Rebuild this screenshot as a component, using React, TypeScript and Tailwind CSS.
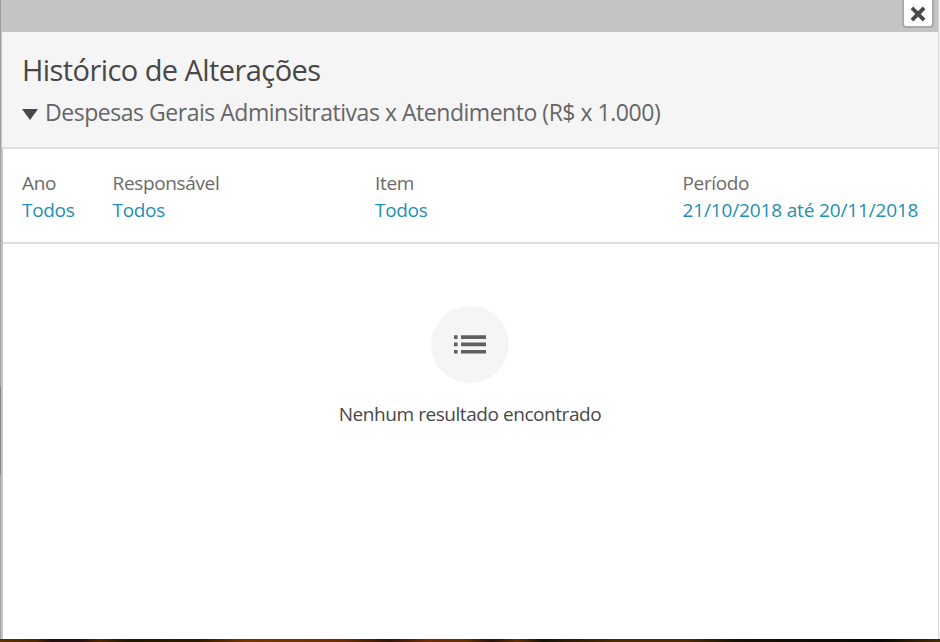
import React from 'react';

const filters = [
  { label: 'Ano', value: 'Todos', width: 'w-[90.5px]', tracking: 'tracking-[-0.3px]' },
  { label: 'Responsável', value: 'Todos', width: 'w-[262.5px]', tracking: 'tracking-[-0.3px]' },
  { label: 'Item', value: 'Todos', width: 'w-[307.5px]', tracking: 'tracking-[-0.3px]' },
  { label: 'Período', value: '21/10/2018 até 20/11/2018', width: 'w-[250px]', tracking: 'tracking-[-0.15px]' },
];

const Header = () => (
  <header className="h-[117px] -ml-px pl-5 bg-[#f5f5f5] border-b-2 border-[#dfdfdf]">
    <h1 className="pt-[18px] text-[29px] leading-10 tracking-[-0.57px] text-[#484848] whitespace-nowrap">
      Histórico de Alterações
    </h1>
    <div className="flex items-center mt-[6px] h-8">
      <svg className="w-4 h-[11px] mt-[5px] mr-[7px] shrink-0" viewBox="0 0 16 11">
        <path d="M0 0h16L8 11z" fill="#484848" />
      </svg>
      <h2 className="text-[23px] leading-8 tracking-[-0.47px] text-[#666] whitespace-nowrap">
        Despesas Gerais Adminsitrativas x Atendimento (R$ x 1.000)
      </h2>
    </div>
  </header>
);

const Filters = () => (
  <div className="h-[95px] bg-white border-b-2 border-[#dfdfdf]">
    <div className="flex pl-[19px] pt-[21px] text-[19px] leading-[27px] whitespace-nowrap">
      {filters.map((filter) => (
        <div key={filter.label} className={`${filter.width} shrink-0`}>
          <div className="text-[#6a6a6a] tracking-[-0.35px]">{filter.label}</div>
          <div className={`text-[#2290b3] ${filter.tracking}`}>{filter.value}</div>
        </div>
      ))}
    </div>
  </div>
);

const EmptyState = () => (
  <div className="flex flex-col items-center pt-[62px] -ml-px">
    <div className="w-[78px] h-[77px] rounded-full bg-[#f5f5f5] flex items-center justify-center">
      <svg className="w-8 h-[19px]" viewBox="0 0 32 19" fill="#606060">
        <path d="M0 .3h3.6v3.6H0zM0 7.6h3.6v3.6H0zM0 14.9h3.6v3.6H0z" />
        <path d="M7 .3h25v3.6H7zM7 7.6h25v3.6H7zM7 14.9h25v3.6H7z" />
      </svg>
    </div>
    <p className="mt-[18px] text-[19px] leading-[27px] tracking-[-0.44px] text-[#484848] whitespace-nowrap">
      Nenhum resultado encontrado
    </p>
  </div>
);

const App = () => {
  return (
    <div className="w-[940px] h-[642px] overflow-hidden flex flex-col bg-[#c4c4c4] font-['Open_Sans','Noto_Sans',sans-serif]">
      <div className="flex flex-1 min-h-0">
        <div className="w-px bg-[#a0a0a0] flex flex-col">
          <div className="h-[387px]"></div>
          <div className="h-[88px] bg-[#858585]"></div>
        </div>
        <div className="w-[937px] flex flex-col">
          <div className="h-8 shrink-0 flex justify-end pr-1">
            <button className="w-8 h-[28px] flex items-center justify-center bg-white border-2 border-t-0 border-[#a9a9a9] rounded-b-[4px]">
              <svg className="w-[16px] h-[16px] mt-px" viewBox="0 0 16 16">
                <path d="M3.3 3.3l9.4 9.4M12.7 3.3L3.3 12.7" stroke="#484848" strokeWidth="3.8" strokeLinecap="square" />
              </svg>
            </button>
          </div>
          <main className="ml-[2px] flex-1 bg-white">
            <Header />
            <Filters />
            <EmptyState />
          </main>
        </div>
        <div className="w-px bg-[#dcdcdc]"></div>
        <div className="w-px bg-[#f2f2f2]"></div>
      </div>

      {/* Strip of the page behind the dialog */}
      <div className="h-[3px] shrink-0 flex">
        <div className="w-[300px] bg-[linear-gradient(90deg,#5b3300_0%,#4c2600_12%,#24100f_17%,#24100f_27%,#4c2600_33%,#221800_42%,#2c1b00_66%,#4b2400_72%,#753400_82%,#793000_100%)]"></div>
        <div className="flex-1 bg-[linear-gradient(90deg,#793000_0%,#6a2c03_7%,#33140a_14%,#702c05_20%,#662e03_26%,#28120b_30%,#602d04_34%,#141405_38%,#2c1b05_42%,#4b2b05_50%,#4b2b05_60%,#191106_68%,#090a04_91%,#442b08_100%)]"></div>
      </div>
    </div>
  );
};

export default App;
